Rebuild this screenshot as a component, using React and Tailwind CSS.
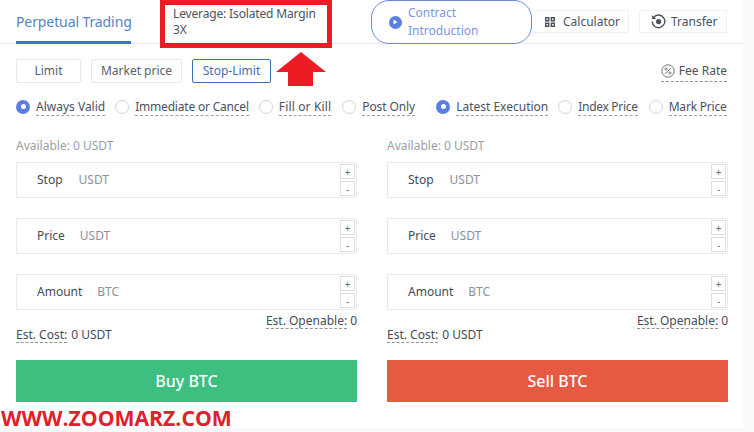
import { useState } from "react";

const font = "font-['Noto_Sans','Open_Sans',sans-serif]";

const Radio = ({ label, checked, className = "", labelClass = "" }) => (
  <div className={`flex items-center ${className}`}>
    {checked ? (
      <span className="w-[14px] h-[14px] rounded-full bg-[#5a7fe0] flex items-center justify-center mr-[6px]">
        <span className="w-[5px] h-[5px] rounded-full bg-white" />
      </span>
    ) : (
      <span className="w-[14px] h-[14px] rounded-full border border-[#d0d4da] bg-white mr-[6px]" />
    )}
    <span className={`text-[12px] leading-[17px] text-[#4a5260] border-b border-dashed border-[#9aa0a8] whitespace-nowrap ${labelClass}`}>
      {label}
    </span>
  </div>
);

const Field = ({ label, unit, gap }) => (
  <div className="relative h-[36px] border border-[#e8eaed] flex items-center pl-[20px] bg-white">
    <span className="text-[12px] text-[#444c58]">{label}</span>
    <span className={`text-[12px] text-[#8b929c] ${gap}`}>{unit}</span>
    <div className="absolute right-[1px] top-[1px] flex flex-col gap-[2px]">
      <span className="w-[15px] h-[15px] border border-[#dcdfe3] flex items-center justify-center text-[10px] leading-none text-[#666d78]">+</span>
      <span className="w-[15px] h-[15px] border border-[#dcdfe3] flex items-center justify-center text-[10px] leading-none text-[#666d78]">-</span>
    </div>
  </div>
);

const OrderForm = ({ action, color, className = "" }) => (
  <div className={`w-[341px] flex flex-col ${className}`}>
    <div className="text-[12px] leading-[18px] text-[#9a9fa6]">Available: 0 USDT</div>
    <div className="mt-[7px] flex flex-col gap-[20px]">
      <Field label="Stop" unit="USDT" gap="ml-[16px]" />
      <Field label="Price" unit="USDT" gap="ml-[15px]" />
      <Field label="Amount" unit="BTC" gap="ml-[15px]" />
    </div>
    <div className="mt-[3px] h-[14px] flex justify-end text-[12px] leading-[16px] text-[#444c58]">
      <span className="border-b border-dashed border-[#8b929c] h-[16px]">Est. Openable:</span>
      <span className="ml-[3px]">0</span>
    </div>
    <div className="h-[16px] flex text-[12px] leading-[16px] text-[#444c58]">
      <span className="border-b border-dashed border-[#8b929c] h-[16px]">Est. Cost:</span>
      <span className="ml-[4px]">0 USDT</span>
    </div>
    <button className={`mt-[17px] h-[42px] w-full text-white text-[16px] font-medium ${color}`}>{action}</button>
  </div>
);

export default function App() {
  const [mode] = useState("Stop-Limit");

  return (
    <div className={`relative w-[754px] h-[432px] overflow-hidden bg-[#f8f9fa] ${font}`}>
      <div className="w-[743px] h-[428px] bg-white flex flex-col">
        {/* Header */}
        <div className="h-[44px] border-b border-[#e6eaee] flex pl-[16px] shrink-0">
          <div className="w-[115px] h-[44px] border-b-[3px] border-[#3a74c4] text-[14px] tracking-[-0.1px] leading-[44px] text-[#5583c6] whitespace-nowrap">
            Perpetual Trading
          </div>
          <div className="w-[150px] ml-[42px] pt-[6px] text-[12px] tracking-[-0.15px] leading-[16px] text-[#4a5260]">
            Leverage: Isolated Margin 3X
          </div>
          <div className="ml-[48px] w-[161px] h-[44px] rounded-[18px] border border-[#6a8ad8] flex items-center pl-[17px] bg-white">
            <span className="w-[13px] h-[13px] rounded-full bg-[#5a7fe0] flex items-center justify-center shrink-0">
              <svg width="5" height="6" viewBox="0 0 5 6"><path d="M0.5 0.5 L4.5 3 L0.5 5.5 Z" fill="#fff" /></svg>
            </span>
            <span className="ml-[6px] text-[12px] leading-[18px] text-[#7d95db]">Contract<br />Introduction</span>
          </div>
          <div className="mt-[10px] w-[97px] h-[23px] border border-[#eef0f3] border-l-0 flex items-center pl-[13px] text-[12px] text-[#4a5260]">
            <svg width="10" height="10" viewBox="0 0 10 10" fill="#4a5260" className="mr-[8px]">
              <path d="M0 0h4.4v4.4H0zM5.6 0H10v4.4H5.6zM0 5.6h4.4V10H0zM5.6 5.6H10V10H5.6z" />
              <path d="M1.4 1.4h1.6v1.6H1.4zM7 1.4h1.6v1.6H7zM1.4 7h1.6v1.6H1.4zM7 7h1.6v1.6H7z" fill="#fff" />
            </svg>
            Calculator
          </div>
          <div className="mt-[10px] ml-[10px] w-[88px] h-[23px] border border-[#eef0f3] flex items-center pl-[11px] text-[12px] text-[#4a5260]">
            <svg width="15" height="15" viewBox="0 0 15 15" fill="none" className="mr-[5px]">
              <path d="M2.6 3.4A6.3 6.3 0 1 1 1.2 7.5" stroke="#4a5260" strokeWidth="1.4" />
              <path d="M0.8 1.2L1.4 5.4L5.4 4.6z" fill="#4a5260" />
              <circle cx="7.6" cy="7.6" r="2.6" fill="#4a5260" />
            </svg>
            Transfer
          </div>
        </div>

        {/* Order types */}
        <div className="mt-[15px] pl-[16px] pr-[16px] flex items-start h-[24px] shrink-0">
          {["Limit", "Market price", "Stop-Limit"].map((item, i) => (
            <div
              key={item}
              className={`h-[24px] flex items-center justify-center text-[12px] rounded-[2px] border ${
                item === mode ? "border-[#3a6fb8] text-[#3f6fb5]" : "border-[#e6e8eb] text-[#5a616c]"
              } ${i === 0 ? "w-[65px]" : i === 1 ? "w-[91px] ml-[10px]" : "w-[79px] ml-[10px]"}`}
            >
              {item}
            </div>
          ))}
          <div className="ml-auto flex items-center border-b border-dashed border-[#8b929c] h-[23px] pt-[1px] text-[12px] text-[#4a5260]">
            <svg width="14" height="14" viewBox="0 0 14 14" fill="none" className="mr-[4px]">
              <circle cx="7" cy="7" r="6.2" stroke="#5a616c" strokeWidth="0.9" />
              <path d="M9.6 4.2L4.4 9.8" stroke="#5a616c" strokeWidth="0.9" />
              <circle cx="5" cy="5" r="1.1" stroke="#5a616c" strokeWidth="0.8" />
              <circle cx="9" cy="9" r="1.1" stroke="#5a616c" strokeWidth="0.8" />
            </svg>
            Fee Rate
          </div>
        </div>

        {/* Options */}
        <div className="mt-[14px] pl-[16px] flex items-center h-[19px] shrink-0">
          <Radio label="Always Valid" checked />
          <Radio label="Immediate or Cancel" className="ml-[10px]" labelClass="tracking-[-0.2px]" />
          <Radio label="Fill or Kill" className="ml-[10px]" labelClass="tracking-[0.15px]" />
          <Radio label="Post Only" className="ml-[11px]" labelClass="tracking-[-0.1px]" />
          <Radio label="Latest Execution" checked className="ml-[21px]" />
          <Radio label="Index Price" className="ml-[10px]" labelClass="tracking-[-0.3px]" />
          <Radio label="Mark Price" className="ml-[11px]" labelClass="tracking-[-0.2px]" />
        </div>

        {/* Buy and sell forms */}
        <div className="mt-[21px] pl-[16px] flex">
          <OrderForm action="Buy BTC" color="bg-[#3dbf7f]" />
          <OrderForm action="Sell BTC" color="bg-[#e65a41]" className="ml-[30px]" />
        </div>
      </div>

      {/* Annotations drawn over the screenshot */}
      <div className="absolute left-[160px] top-0 w-[172px] h-[48px] border-[5px] border-[#ed1c24]" />
      <svg width="52" height="34" viewBox="0 0 52 34" className="absolute left-[275px] top-[52px]">
        <path d="M26 0 L51 20 L38 20 L38 34 L13 34 L13 20 L1 20 Z" fill="#ed1c24" />
      </svg>
      <div className="absolute left-[1px] top-[405px] text-[21.2px] leading-[26px] font-bold text-[#e0202a] font-['Open_Sans',sans-serif] whitespace-nowrap">
        WWW.ZOOMARZ.COM
      </div>
    </div>
  );
}
